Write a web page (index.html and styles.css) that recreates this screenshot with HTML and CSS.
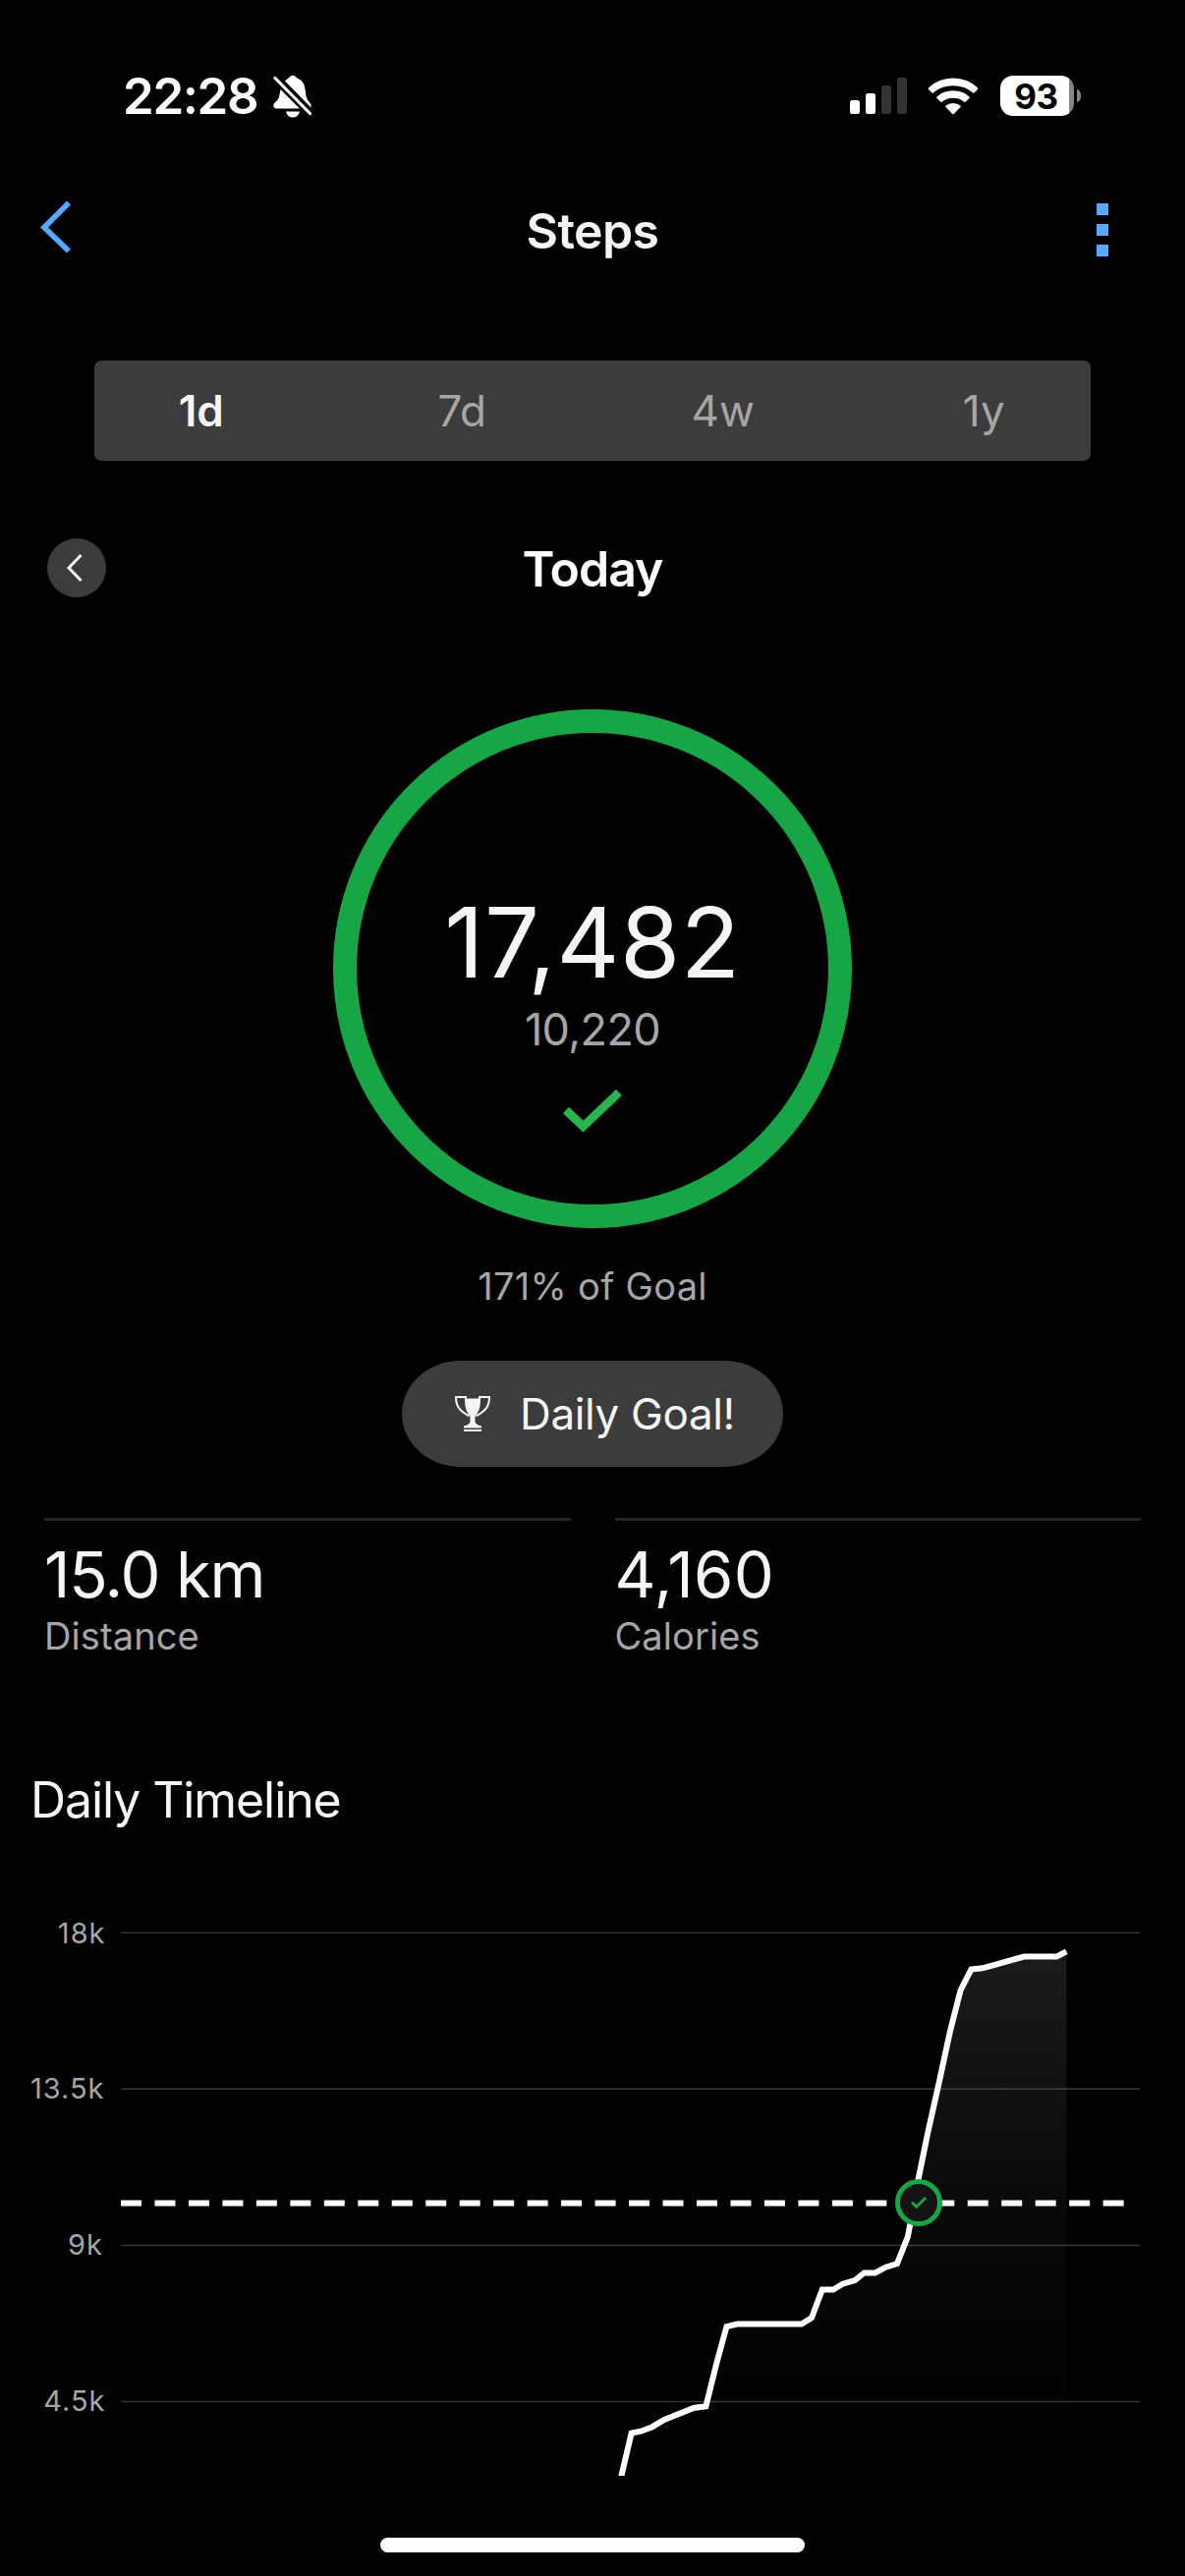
FILE: index.html
```html
<!DOCTYPE html>
<html lang="en">
<head>
    <meta charset="UTF-8">
    <meta name="viewport" content="width=device-width, initial-scale=1.0">
    <title>Steps</title>
    <link rel="stylesheet" href="styles.css">
</head>
<body>
    <div class="status-bar">
        <div class="status-left">
            <span class="time">22:28</span>
            <svg class="bell" width="40" height="44" viewBox="0 0 40 44">
                <path fill="#fff" d="M12 6.500C14 4 15.500 4 16.500 2.500Q20 -1.200 23.500 2.500C24.500 4 26 4 28.500 6C32 9.500 32.500 13 33 18C33.500 25 36 27 38.500 30V33.500Z"/>
                <path fill="#fff" d="M7.500 15L27 34.500H3Q0 34 0.300 31C1.500 27 6 27 6.500 20Z"/>
                <path fill="#fff" d="M13 37.500H27Q25.500 43.500 20 43.500T13 37.500Z"/>
                <path stroke="#000" stroke-width="7" d="M2 3.500L39 41"/>
                <path stroke="#fff" stroke-width="3.200" stroke-linecap="round" d="M2 3.500L37.500 39.500"/>
            </svg>
        </div>
        <div class="status-right">
            <svg width="58" height="37" viewBox="0 0 58 37">
                <rect x="0" y="23" width="10" height="14" rx="2.500" fill="#fff"/>
                <rect x="16" y="16" width="10" height="21" rx="2.500" fill="#fff"/>
                <rect x="32" y="8" width="10" height="29" rx="2.500" fill="#333"/>
                <rect x="48" y="0" width="10" height="37" rx="2.500" fill="#333"/>
            </svg>
            <svg class="wifi" width="52" height="38" viewBox="0 0 52 38">
                <path fill="#fff" d="M0.800 10.500Q11 0.500 26 0.500T51.200 10.500Q51.500 11.300 51 11.900L47.400 15.500Q46.800 15.900 46.200 15.400Q38 8.300 26 8.300T5.800 15.400Q5.200 15.900 4.600 15.500L1 11.900Q0.500 11.300 0.800 10.500Z"/>
                <path fill="#fff" d="M9.500 19.500Q16 13.300 26 13.300T42.500 19.500Q43 20.200 42.500 20.900L38.500 24.800Q38 25.200 37.300 24.800Q32.500 20.800 26 20.800T14.700 24.800Q14 25.200 13.500 24.800L9.500 20.900Q9 20.200 9.500 19.500Z"/>
                <path fill="#fff" d="M18.500 28.500Q21.500 26 26 26T33.500 28.500Q34 29.200 33.500 29.900L26.700 36.900Q26 37.500 25.300 36.900L18.500 29.900Q18 29.200 18.500 28.500Z"/>
            </svg>
            <div class="battery"><span>93</span></div>
            <div class="battery-cap"></div>
        </div>
    </div>

    <div class="nav">
        <svg width="32" height="54" viewBox="0 0 32 54">
            <path fill="none" stroke="#55a9ff" stroke-width="5.600" d="M29 2.500L4 27.500L29 51.500"/>
        </svg>
        <h1>Steps</h1>
        <div class="menu-dots"><i></i><i></i><i></i></div>
    </div>

    <div class="tabs">
        <div class="tab active">1d</div>
        <div class="tab">7d</div>
        <div class="tab">4w</div>
        <div class="tab">1y</div>
    </div>

    <div class="day">
        <div class="prev-btn">
            <svg width="16" height="28" viewBox="0 0 16 28">
                <path fill="none" stroke="#f5f5f5" stroke-width="3" d="M14.500 1L2 14L14.500 27"/>
            </svg>
        </div>
        <h2>Today</h2>
    </div>

    <div class="ring">
        <div class="steps">17,482</div>
        <div class="goal">10,220</div>
        <svg width="60" height="44" viewBox="0 0 60 44">
            <path fill="none" stroke="#27b550" stroke-width="8.600" d="M3 21L20.500 37.500L57 3"/>
        </svg>
    </div>
    <div class="percent">171% of Goal</div>

    <div class="badge">
        <svg width="36" height="36" viewBox="0 0 36 36">
            <path fill="#f5f5f5" d="M10 2.500H26C26 10 25 16 20.500 20.500V26Q21 29 27 30.500V32.500H9V30.500Q15 29 15.500 26V20.500C11 16 10 10 10 2.500Z"/>
            <path fill="none" stroke="#f5f5f5" stroke-width="2" d="M11 3V1H1C1 11 5 15 14.500 20.500M25 3V1H35C35 11 31 15 21.500 20.500"/>
            <rect x="9" y="34" width="18" height="2" fill="#f5f5f5"/>
        </svg>
        <span>Daily Goal!</span>
    </div>

    <div class="stats">
        <div class="stat">
            <div class="stat-value distance">15.0 km</div>
            <div class="stat-label">Distance</div>
        </div>
        <div class="stat">
            <div class="stat-value calories">4,160</div>
            <div class="stat-label">Calories</div>
        </div>
    </div>

    <h3>Daily Timeline</h3>
    <svg class="chart" width="1206" height="658" viewBox="0 1862 1206 658">
        <defs>
            <linearGradient id="area" gradientUnits="userSpaceOnUse" x1="0" y1="1986" x2="0" y2="2520">
                <stop offset="0" stop-color="#909090" stop-opacity="0.19"/>
                <stop offset="0.26" stop-color="#909090" stop-opacity="0.12"/>
                <stop offset="0.5" stop-color="#909090" stop-opacity="0.06"/>
                <stop offset="1" stop-color="#909090" stop-opacity="0"/>
            </linearGradient>
        </defs>
        <!-- grid -->
        <g stroke="#353535" stroke-width="1.500">
            <path d="M123 1967.250H1160.500M123 2126.250H1160.500M123 2285.500H1160.500M123 2444.500H1160.500"/>
        </g>
        <g class="axis-label">
            <text x="107.500" y="1978">18k</text>
            <text x="106.500" y="2136">13.5k</text>
            <text x="105" y="2295">9k</text>
            <text x="107.500" y="2454">4.5k</text>
        </g>
        <!-- goal line -->
        <path stroke="#fff" stroke-width="6.200" stroke-dasharray="21 13.470" d="M123 2242.500H1144"/>
        <!-- steps -->
        <path fill="url(#area)" d="M632 2522L642.600 2476.500L652.200 2474.700L663.800 2470.200L676 2463L706 2451L718.400 2449.200L729.200 2405.800L739.500 2368.200L750.300 2365.500H815.700L826 2359.200L836.800 2330.500H848L857.600 2324.700L870 2321.100L879.500 2313.500H890.700L901.500 2307.700L913 2304.100L923.800 2276.800L926.500 2263L934.500 2218.600L944 2172L955.300 2121.500L967.200 2066.400L977.600 2025.700L988.400 2004.600L1000 2003.300L1042.200 1991.600H1075.300L1085.500 1986.300V2522Z"/>
        <path fill="none" stroke="#fff" stroke-width="6" d="M631.500 2524L642.600 2476.500L652.200 2474.700L663.800 2470.200L676 2463L706 2451L718.400 2449.200L729.200 2405.800L739.500 2368.200L750.300 2365.500H815.700L826 2359.200L836.800 2330.500H848L857.600 2324.700L870 2321.100L879.500 2313.500H890.700L901.500 2307.700L913 2304.100L923.800 2276.800L926.500 2263L934.500 2218.600L944 2172L955.300 2121.500L967.200 2066.400L977.600 2025.700L988.400 2004.600L1000 2003.300L1042.200 1991.600H1075.300L1085.300 1986.300"/>
        <!-- goal reached -->
        <circle cx="935" cy="2242" r="21.500" fill="#141414" stroke="#17a645" stroke-width="5"/>
        <path fill="none" stroke="#17a645" stroke-width="2.800" d="M928 2241.500L932.700 2246.300L942 2237"/>
    </svg>

    <div class="home-indicator"></div>
</body>
</html>
```
FILE: styles.css
```css
* {
    box-sizing: border-box;
}

body {
    margin: 0;
    width: 1206px;
    height: 2622px;
    overflow: hidden;
    background: #000;
    color: #f5f5f5;
    font-family: Inter, "Liberation Sans", sans-serif;
    display: flex;
    flex-direction: column;
}

h1, h2, h3 {
    margin: 0;
    color: #f5f5f5;
    font-size: 50px;
    font-weight: 600;
    line-height: 60px;
}

svg {
    display: block;
    flex-shrink: 0;
}

.status-bar {
    height: 195px;
    padding: 0 106px 0 125px;
    display: flex;
    justify-content: space-between;
    align-items: center;
}

.status-left, .status-right {
    display: flex;
    align-items: center;
}

.time {
    width: 153px;
    color: #fff;
    font-size: 51px;
    font-weight: 600;
    letter-spacing: -1.4px;
}

.wifi {
    margin: 0 22px 0 21px;
}

.battery {
    width: 75px;
    height: 41px;
    border-radius: 13px;
    background: linear-gradient(to right, #fff 70px, #858585 70px);
    color: #000;
    font-size: 35px;
    font-weight: 700;
    line-height: 42px;
    letter-spacing: -0.5px;
    padding-right: 2px;
    text-align: center;
}

.battery-cap {
    width: 4px;
    height: 13px;
    margin-left: 3px;
    border-radius: 0 4px 4px 0 / 0 6px 6px 0;
    background: #858585;
}

.nav {
    height: 78px;
    padding: 0 78px 0 41px;
    display: grid;
    grid-template-columns: 99px 1fr 62px;
    align-items: center;
}

.nav svg {
    margin-bottom: 6px;
}

.nav h1 {
    padding-top: 1px;
    letter-spacing: -0.6px;
    text-align: center;
}

.menu-dots {
    justify-self: end;
    display: flex;
    flex-direction: column;
    gap: 9px;
}

.menu-dots i {
    width: 12px;
    height: 12px;
    background: #55a9ff;
}

.tabs {
    height: 102px;
    margin: 94px 96px 0;
    border-radius: 7px;
    background: #3c3c3c;
    display: grid;
    grid-template-columns: repeat(4, 1fr);
    gap: 48px;
    align-items: center;
    text-align: center;
}

.tab {
    color: #a6a6a6;
    font-size: 44px;
}

.tab.active {
    color: #f5f5f5;
    font-weight: 600;
}

.day {
    height: 60px;
    margin-top: 78px;
    padding: 0 48px;
    display: grid;
    grid-template-columns: 60px 1fr 60px;
    align-items: center;
    text-align: center;
}

.day h2 {
    padding-top: 2px;
    color: #fff;
    letter-spacing: -1px;
}

.prev-btn {
    width: 60px;
    height: 60px;
    padding-right: 4px;
    border-radius: 50%;
    background: #3c3c3c;
    display: flex;
    justify-content: center;
    align-items: center;
}

.ring {
    width: 528px;
    height: 528px;
    margin: 115px auto 0;
    padding-top: 153px;
    border: 24px solid #17a645;
    border-radius: 50%;
    display: flex;
    flex-direction: column;
    align-items: center;
}

.steps {
    font-size: 99px;
    line-height: 120px;
    letter-spacing: 0.6px;
}

.goal {
    color: #a6a6a6;
    font-size: 45px;
    line-height: 57px;
    letter-spacing: -0.6px;
    margin-bottom: 33px;
}

.percent {
    margin-top: 35px;
    color: #a6a6a6;
    font-size: 38px;
    line-height: 48px;
    letter-spacing: 0.3px;
    text-align: center;
}

.badge {
    width: 388px;
    height: 108px;
    margin: 52px auto 0;
    padding-left: 54px;
    border-radius: 60px / 54px;
    background: #3c3c3c;
    display: flex;
    align-items: center;
    gap: 30px;
    font-size: 44px;
    letter-spacing: -0.35px;
}

.stats {
    margin: 52px 45px 0;
    display: grid;
    grid-template-columns: 1fr 1fr;
    gap: 45px;
}

.stat {
    padding-top: 15px;
    border-top: 3px solid #242424;
}

.stat-value {
    font-size: 65px;
    line-height: 80px;
}

.stat-value.distance {
    letter-spacing: -1.3px;
}

.stat-value.calories {
    letter-spacing: 0.4px;
}

.stat-label {
    color: #a6a6a6;
    font-size: 38px;
    line-height: 44px;
    letter-spacing: 0.1px;
    margin-bottom: 2px;
}

h3 {
    margin: 113px 0 0 31px;
    font-weight: 400;
    letter-spacing: -1.1px;
}

.axis-label {
    fill: #a6a6a6;
    font-size: 29px;
    letter-spacing: 1px;
    text-anchor: end;
}

.home-indicator {
    width: 432px;
    height: 15px;
    margin: 63px auto 0;
    border-radius: 8px;
    background: #fff;
}
```
